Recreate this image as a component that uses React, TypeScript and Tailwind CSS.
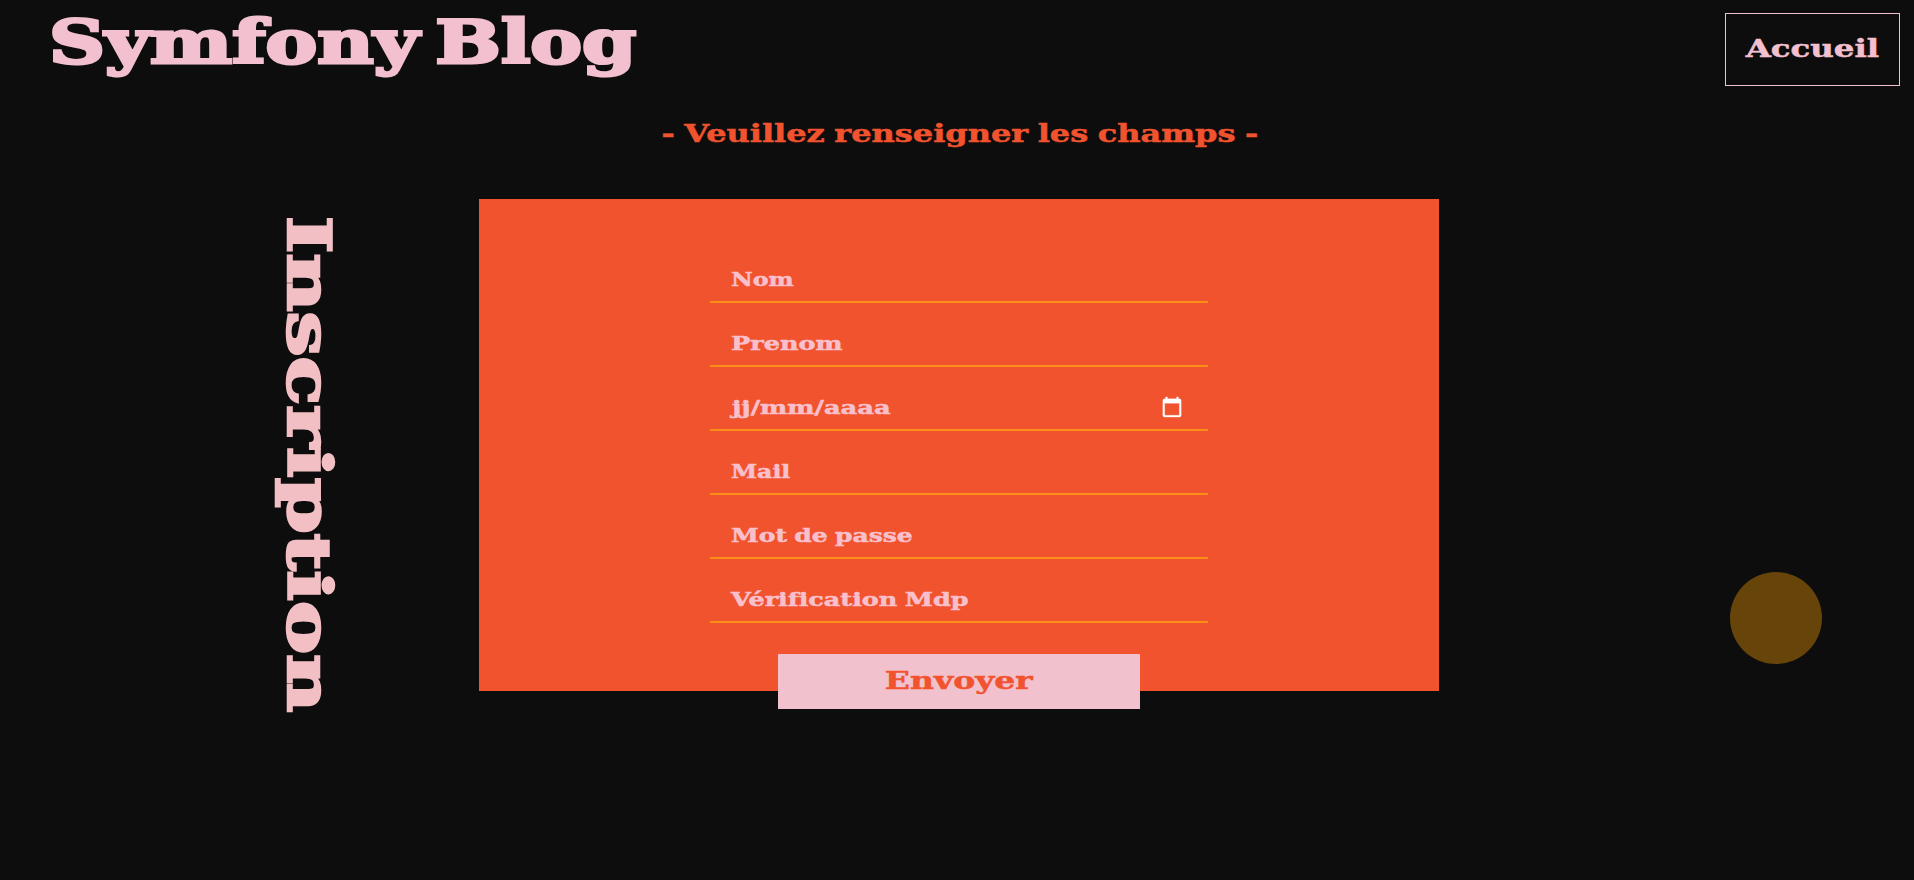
type Field = { label: string; stretch: string; date?: boolean };

const fields: Field[] = [
  { label: 'Nom', stretch: 'scale-x-[1.32]' },
  { label: 'Prenom', stretch: 'scale-x-[1.42]' },
  { label: 'jj/mm/aaaa', stretch: 'scale-x-[1.43] ml-px', date: true },
  { label: 'Mail', stretch: 'scale-x-[1.31]' },
  { label: 'Mot de passe', stretch: 'scale-x-[1.39] [word-spacing:-1px]' },
  { label: 'Vérification Mdp', stretch: 'scale-x-[1.415] [word-spacing:-1px]' },
];

function CalendarIcon() {
  return (
    <svg viewBox="0 0 24 24" className="-mt-0.5 h-[22px] w-[22px] fill-white stroke-white [stroke-width:0.3]">
      <path d="M20 3h-1V1h-2v2H7V1H5v2H4c-1.1 0-2 .9-2 2v16c0 1.1.9 2 2 2h16c1.1 0 2-.9 2-2V5c0-1.1-.9-2-2-2zm0 18H4V8h16v13z" />
    </svg>
  );
}

export default function App() {
  return (
    <div className="relative h-[880px] w-full overflow-hidden bg-[#0d0d0d] font-['DejaVu_Serif','Liberation_Serif',serif] font-bold text-[#f2c0ce] [font-variant-ligatures:none]">
      <header className="flex h-[99px] items-start justify-between pr-[14px] pl-[49px]">
        <h1 className="origin-left scale-x-[1.315] text-[59px] leading-[86px] whitespace-nowrap [-webkit-text-stroke:3px_#f2c0ce] [word-spacing:-8px]">
          Symfony Blog
        </h1>
        <a className="mt-[13px] flex h-[73px] w-[175px] items-center justify-center border border-[#f2c0ce]">
          <span className="-mt-0.5 inline-block scale-x-[1.35] text-[24px] leading-8 [-webkit-text-stroke:0.5px_#f2c0ce]">
            Accueil
          </span>
        </a>
      </header>

      <main>
        <h2 className="flex h-[100px] justify-center pt-[18px] pl-[5px] text-[24px] leading-[34px] text-[#f2532f]">
          <span className="inline-block h-[34px] scale-x-[1.333] whitespace-nowrap [-webkit-text-stroke:0.5px_#f2532f] [word-spacing:-1.2px]">
            - Veuillez renseigner les champs -
          </span>
        </h2>

        <div className="flex">
          <aside className="w-[479px] pt-[17px] pl-[265px]">
            <p className="h-[366px] w-[87px] origin-top scale-y-[1.355] text-[59px] leading-[87px] whitespace-nowrap text-[#f1bfc4] [-webkit-text-stroke:2.5px_#f1bfc4] [writing-mode:vertical-rl]">
              Inscription
            </p>
          </aside>

          <form className="flex h-[492px] w-[960px] flex-col items-center bg-[#f2532f] pt-10">
            {fields.map((field) => (
              <div
                key={field.label}
                className="flex h-16 w-[498px] shrink-0 items-center justify-between border-b-2 border-[#fc8f18] pt-5 pr-[25px] pl-[21px] text-[18px] leading-6 text-[#f8c0cc]"
              >
                <span
                  className={`inline-block origin-left whitespace-nowrap [-webkit-text-stroke:0.5px_#f8c0cc] ${field.stretch}`}
                >
                  {field.label}
                </span>
                {field.date && <CalendarIcon />}
              </div>
            ))}
            <button
              type="button"
              className="mt-[31px] flex h-[55px] w-[362px] shrink-0 items-center justify-center bg-[#f2c1ce] text-[24px] leading-8 text-[#f2532f]"
            >
              <span className="-mt-0.5 inline-block scale-x-[1.375] [-webkit-text-stroke:0.5px_#f2532f]">Envoyer</span>
            </button>
          </form>
        </div>
      </main>

      <div className="absolute top-[572px] left-[1730px] h-[92px] w-[92px] rounded-full bg-[#67450a]" />
    </div>
  );
}
